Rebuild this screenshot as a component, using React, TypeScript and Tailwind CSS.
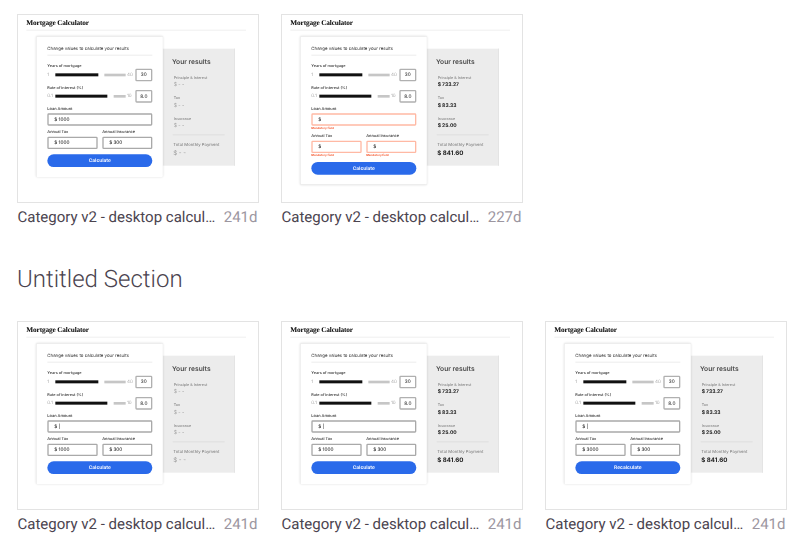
type Mock = {
  age: string;
  loan: string;
  tax: string;
  insurance: string;
  button: string;
  results: boolean;
  error?: boolean;
};

const topRow: Mock[] = [
  { age: "241d", loan: "$ 1000", tax: "$ 1000", insurance: "$ 300", button: "Calculate", results: false },
  { age: "227d", loan: "$", tax: "$", insurance: "$", button: "Calculate", results: true, error: true },
];

const bottomRow: Mock[] = [
  { age: "241d", loan: "$ |", tax: "$ 1000", insurance: "$ 300", button: "Calculate", results: false },
  { age: "241d", loan: "$ |", tax: "$ 1000", insurance: "$ 300", button: "Calculate", results: true },
  { age: "241d", loan: "$ |", tax: "$ 3000", insurance: "$ 300", button: "Recalculate", results: true },
];

function Slider({ min, max, value, fill, rest }: { min: string; max: string; value: string; fill: number; rest: number }) {
  return (
    <div className="flex h-[37px] items-center text-[13.5px] text-[#a8a8a8]">
      <span className="w-[24px] shrink-0">{min}</span>
      <div className="flex w-[211px] shrink-0 items-center justify-between">
        <div className="h-[9px] bg-[#111]" style={{ width: fill }} />
        <div className="h-[8px] bg-[#c6c6c6]" style={{ width: rest }} />
      </div>
      <span className="w-[29px] shrink-0 pl-[4px]">{max}</span>
      <span className="flex h-[38px] w-[51px] shrink-0 items-center justify-center rounded-[4px] border-[4px] border-[#b0b0b0] text-[14px] font-medium text-[#444]">
        {value}
      </span>
    </div>
  );
}

function Field({ label, value, error }: { label: string; value: string; error?: boolean }) {
  return (
    <div className="min-w-0 flex-1">
      <div className="h-[12px] text-[11.7px] leading-[12px] font-semibold whitespace-nowrap text-[#444]">{label}</div>
      <div
        className={`mt-[8px] flex h-[37px] items-center rounded-[4px] border-[4px] pl-[17px] text-[14px] font-medium text-[#333] ${
          error ? "border-[#ffb9a4]" : "border-[#a9a9a9]"
        }`}
      >
        {value}
      </div>
      {error && (
        <div className="mt-[4px] h-[9px] text-[8.7px] leading-[9px] font-bold whitespace-nowrap text-[#f4582f]">Mandatory field</div>
      )}
    </div>
  );
}

function Result({ label, value, filled }: { label: string; value: string; filled: boolean }) {
  return (
    <div className="h-[61px]">
      <div className="h-[14px] text-[11.2px] leading-[14px] font-medium whitespace-nowrap text-[#858585]">{label}</div>
      <div className={`mt-[5px] h-[18px] text-[15px] leading-[18px] whitespace-nowrap ${filled ? "font-bold text-[#222]" : "text-[#a0a0a0]"}`}>
        {filled ? value : "$ - -"}
      </div>
    </div>
  );
}

/* The calculator is laid out on a 720px canvas and shown, slightly soft, at a third of its size. */
function Preview({ mock }: { mock: Mock }) {
  const { error, results } = mock;
  return (
    <div className="h-[189px] w-[242px] overflow-hidden border border-[#e3e3e3] bg-white">
      <div className="h-[561px] w-[720px] origin-top-left scale-[0.33333] font-['Inter',sans-serif] blur-[1.2px] [text-rendering:geometricPrecision]">
        <div className="ml-[25px] flex h-[47px] w-[659px] items-center border-b-[3px] border-[#efefef]">
          <span className="font-['Liberation_Serif',serif] text-[22px] font-bold tracking-[-0.5px] whitespace-nowrap text-black">
            Mortgage Calculator
          </span>
        </div>
        <div className="ml-[56px] flex items-start pt-[18px]">
          <div
            className={`z-10 w-[378px] shrink-0 rounded-[3px] bg-white pr-[31px] pl-[32px] shadow-[0_0_7px_rgba(0,0,0,0.14)] ${
              error ? "h-[443px]" : "h-[421px]"
            }`}
          >
            <div className="flex h-[57px] items-center border-b-[3px] border-[#ececec] pt-[22px] text-[13.2px] whitespace-nowrap text-[#333]">
              Change values to calculate your results
            </div>
            <div className="mt-[25px] h-[12px] text-[11.5px] leading-[12px] font-semibold text-[#444]">Years of mortgage</div>
            <div className="mt-[2px]">
              <Slider min="1" max="40" value="30" fill={129} rest={64} />
            </div>
            <div className="mt-[15px] h-[12px] text-[11.5px] leading-[12px] font-semibold text-[#444]">Rate of interest (%)</div>
            <div>
              <Slider min="0.1" max="10" value="8.0" fill={156} rest={36} />
            </div>
            <div className="mt-[13px] flex">
              <Field label="Loan Amount" value={mock.loan} error={error} />
            </div>
            <div className={`flex gap-[14px] ${error ? "mt-[12px]" : "mt-[13px]"}`}>
              <Field label="Annual Tax" value={mock.tax} error={error} />
              <Field label="Annual Insurance" value={mock.insurance} error={error} />
            </div>
            <div
              className={`flex h-[38px] items-center justify-center rounded-full bg-[#2a6aea] text-[14.5px] font-bold text-[#eef3ff] ${
                error ? "mt-[14px]" : "mt-[16px]"
              }`}
            >
              {mock.button}
            </div>
          </div>
          <div className="mt-[36px] h-[351px] w-[217px] shrink-0 border-r-[3px] border-[#e4e4e4] bg-[#ececec] pl-[28px]">
            <div className="mt-[26px] h-[24px] text-[20px] leading-[24px] font-semibold whitespace-nowrap text-[#4c4c4c]">Your results</div>
            <div className="mt-[30px] pl-[5px]">
              <Result label="Principle & Interest" value="$ 733.27" filled={results} />
              <Result label="Tax" value="$ 83.33" filled={results} />
              <Result label="Insurance" value="$ 25.00" filled={results} />
            </div>
            <div className="mt-[-6px] ml-[2px] h-[3px] w-[156px] bg-[#dfdfdf]" />
            <div className="mt-[21px] h-[16px] pl-[4px] text-[12.8px] leading-[16px] whitespace-nowrap text-[#757575]">
              Total Monthly Payment
            </div>
            <div
              className={`mt-[6px] h-[20px] pl-[4px] leading-[20px] whitespace-nowrap ${
                results ? "text-[18.5px] font-bold text-[#1a1a1a]" : "text-[18px] text-[#9a9a9a]"
              }`}
            >
              {results ? "$ 841.60" : "$ - -"}
            </div>
          </div>
        </div>
      </div>
    </div>
  );
}

function Tile({ mock }: { mock: Mock }) {
  return (
    <div className="w-[242px]">
      <Preview mock={mock} />
      <div className="flex h-[28px] items-center justify-between pr-[1.5px] pl-[0.5px] text-[15px] whitespace-nowrap [text-rendering:geometricPrecision]">
        <span className="text-[#4b444f]">Category v2 - desktop calcul…</span>
        <span className="text-[#9c969f]">{mock.age}</span>
      </div>
    </div>
  );
}

export default function App() {
  return (
    <main className="h-[544px] w-[804px] overflow-hidden bg-white pt-[14px] pl-[17px] font-['Roboto',sans-serif]">
      <section className="flex gap-[22px]">
        {topRow.map((m, i) => (
          <Tile key={i} mock={m} />
        ))}
      </section>
      <h2 className="mt-[32px] flex h-[32px] items-center text-[24px] font-light text-[#4b444f] [text-rendering:geometricPrecision]">
        Untitled Section
      </h2>
      <section className="mt-[26px] flex gap-[22px]">
        {bottomRow.map((m, i) => (
          <Tile key={i} mock={m} />
        ))}
      </section>
    </main>
  );
}
